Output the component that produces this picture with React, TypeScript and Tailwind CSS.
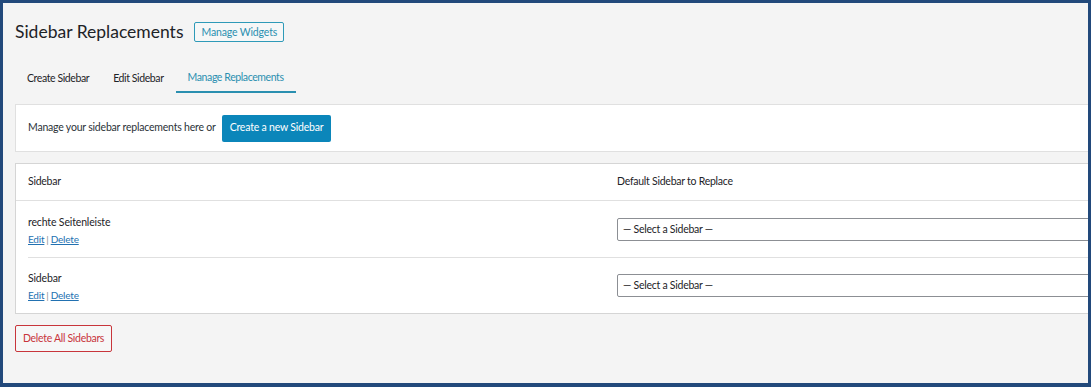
import React from "react";

const font = { fontFamily: 'Lato, "Noto Sans", sans-serif' };

function Row({ name }: { name: string }) {
  return (
    <div className="flex h-[56px]">
      <div className="w-[589px] shrink-0 px-[12px] pt-[13px]">
        <div className="text-[10.5px] tracking-[-0.15px] leading-[16px] text-[#1d2327]">{name}</div>
        <div className="mt-[1px] text-[10px] tracking-[-0.2px] leading-[16px] text-[#8c8f94]">
          <a className="text-[#2271b1] underline">Edit</a>
          <span className="mx-[2px]">|</span>
          <a className="text-[#2271b1] underline">Delete</a>
        </div>
      </div>
      <div className="flex-1 px-[12px] pt-[17px]">
        <div className="h-[23px] w-[600px] border border-[#8c8f94] rounded-[2px] bg-white px-[5px] flex items-center text-[10.5px] tracking-[-0.25px] text-[#1d2327]">
          — Select a Sidebar —
        </div>
      </div>
    </div>
  );
}

export default function App() {
  return (
    <div
      style={font}
      className="w-[1091px] h-[387px] overflow-hidden bg-[#f4f4f4] border-[#22497b] border-t-[3px] border-l-[3px] border-r-[3px] border-b-[4px]"
    >
      <div className="w-[1300px] pl-[12px]">
        {/* Title */}
        <div className="mt-[19px] flex h-[20px] items-center">
          <h1 className="text-[17.5px] leading-[20px] text-[#1d2327] font-normal">Sidebar Replacements</h1>
          <button className="ml-[11px] h-[20px] px-[6px] border border-[#2e9ab8] text-[#2a8fb0] text-[10.5px] tracking-[-0.15px] leading-[18px] rounded-[2px] bg-[#f6f7f7]">
            Manage Widgets
          </button>
        </div>

        {/* Tabs */}
        <div className="mt-[19px] flex h-[32px] text-[10.5px] tracking-[-0.4px]">
          <div className="px-[12px] pt-[3px] flex items-center text-[#1d2327]">Create Sidebar</div>
          <div className="px-[12px] pt-[3px] flex items-center text-[#1d2327]">Edit Sidebar</div>
          <div className="px-[12px] pt-[3px] flex items-center text-[#2a8fb0] border-b-2 border-[#2a8fb0]">
            Manage Replacements
          </div>
        </div>

        {/* Intro card */}
        <div className="mt-[11px] h-[48px] bg-white border border-[#e0e0e0] flex items-center px-[12px]">
          <span className="text-[10.5px] tracking-[-0.2px] text-[#2c3338]">Manage your sidebar replacements here or</span>
          <button className="ml-[6px] h-[27px] px-[8px] bg-[#0b86ba] text-white text-[10.5px] tracking-[-0.2px] rounded-[2px]">
            Create a new Sidebar
          </button>
        </div>

        {/* Table */}
        <div className="mt-[11px] bg-white border border-[#d5d5d5]">
          <div className="flex h-[37px] items-center text-[10.5px] tracking-[-0.25px] text-[#1d2327] border-b border-[#e0e0e0]">
            <div className="w-[589px] shrink-0 px-[12px]">Sidebar</div>
            <div className="px-[12px]">Default Sidebar to Replace</div>
          </div>
          <Row name="rechte Seitenleiste" />
          <div className="ml-[12px] border-t border-[#e0e0e0]" />
          <div className="-mt-[1px]">
            <Row name="Sidebar" />
          </div>
        </div>

        {/* Delete all */}
        <button className="mt-[11px] h-[27px] px-[7px] border border-[#c8353b] text-[#c8353b] text-[10.5px] tracking-[-0.3px] rounded-[2px] bg-[#f6f7f7]">
          Delete All Sidebars
        </button>
      </div>
    </div>
  );
}
